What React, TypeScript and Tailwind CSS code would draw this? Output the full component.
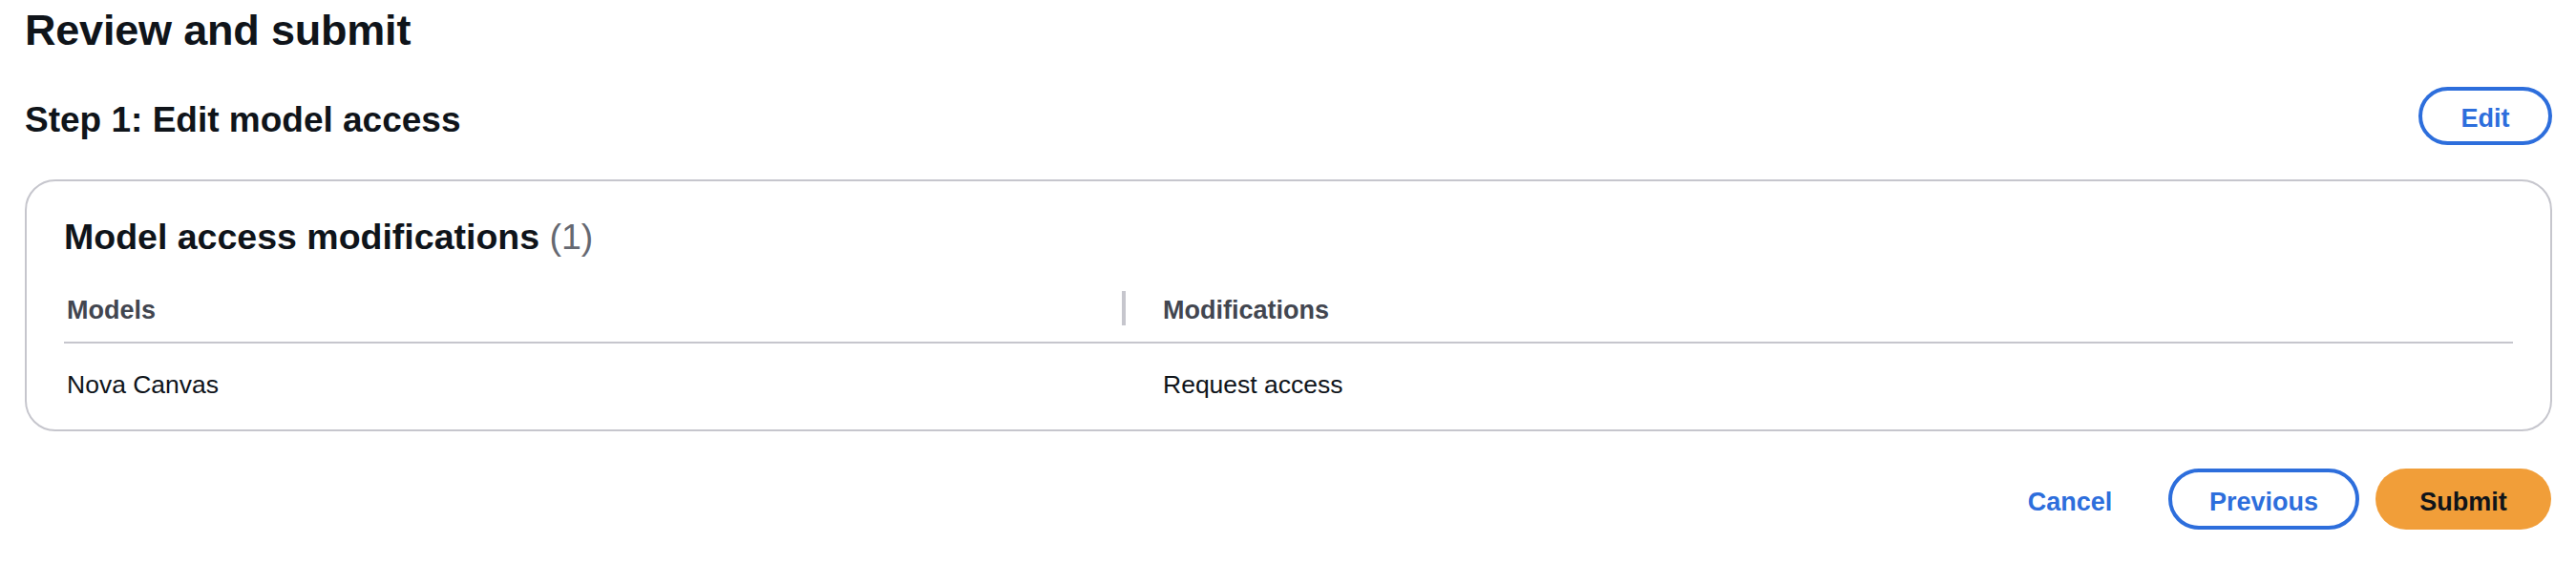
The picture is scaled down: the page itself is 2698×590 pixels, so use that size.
import React from "react";

export default function App() {
  return (
    <div
      className="w-[2698px] h-[590px] bg-white pl-[26px] pr-[25px] text-[#0f141a]"
      style={{ fontFamily: '"Liberation Sans", Arial, sans-serif' }}
    >
      <h1 className="pt-[4px] text-[45px] leading-[56px] font-bold tracking-[-0.2px]">Review and submit</h1>

      <div className="mt-[31px] flex items-start justify-between">
        <h2 className="mt-[13px] text-[37px] leading-[44px] font-bold">Step 1: Edit model access</h2>
        <button className="flex h-[61px] w-[140px] items-center justify-center rounded-full border-[4px] border-[#2d6edc] bg-white text-[27px] font-bold text-[#2d6edc]">
          <span className="pt-[4px] leading-[32px]">Edit</span>
        </button>
      </div>

      <div className="mt-[36px] rounded-[32px] border-[2px] border-[#c6c6cd] px-[39px]">
        <h2 className="pt-[36px] text-[37.5px] leading-[44px] font-bold">
          Model access modifications <span className="font-normal text-[#656871]">(1)</span>
        </h2>

        <div className="mt-[18px]">
          <div className="grid h-[72px] grid-cols-[1112px_1fr] items-center border-b-[2px] border-[#c6c6cd] text-[27px] font-bold text-[#424650]">
            <div className="flex h-[36px] items-center justify-between">
              <span className="pl-[3px] pt-[4px] leading-[36px]">Models</span>
              <span className="h-[36px] w-[4px] bg-[#c6c6cd]" />
            </div>
            <div className="pl-[39px] pt-[4px] leading-[36px]">Modifications</div>
          </div>
          <div className="grid grid-cols-[1112px_1fr] pt-[25px] pb-[29px] text-[26.5px] leading-[36px]">
            <div className="pl-[3px]">Nova Canvas</div>
            <div className="pl-[39px]">Request access</div>
          </div>
        </div>
      </div>

      <div className="mt-[39px] flex items-center justify-end gap-[17px] pr-[1px]">
        <button className="flex h-[64px] w-[172px] items-center justify-center rounded-full text-[27px] font-bold text-[#2d6edc]">
          <span className="pt-[5px] leading-[32px]">Cancel</span>
        </button>
        <button className="flex h-[64px] w-[200px] items-center justify-center rounded-full border-[4px] border-[#2d6edc] bg-white text-[27px] font-bold text-[#2d6edc]">
          <span className="pt-[5px] leading-[32px]">Previous</span>
        </button>
        <button className="flex h-[64px] w-[184px] items-center justify-center rounded-full bg-[#f19e39] text-[27px] font-bold text-[#0f141a]">
          <span className="pt-[5px] leading-[32px]">Submit</span>
        </button>
      </div>
    </div>
  );
}
